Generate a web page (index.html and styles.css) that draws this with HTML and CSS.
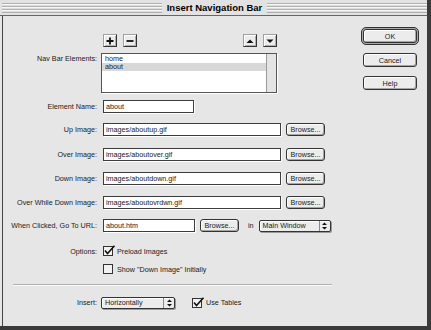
FILE: index.html
```html
<!DOCTYPE html>
<html lang="en">
<head>
  <meta charset="UTF-8" />
  <title>Insert Navigation Bar</title>
  <link rel="stylesheet" href="styles.css">
</head>
<body>

  <div class="window">
    <!-- Title Bar -->
    <div class="titlebar">
      <div class="stripes"><span class="title">Insert Navigation Bar</span></div>
    </div>

    <div class="content">
      <!-- Form -->
      <div class="form">
        <div class="row tools">
          <span class="label"></span>
          <div class="tool-group">
            <div class="tool-pair">
              <span class="tool-btn"><svg width="8" height="8" viewBox="0 0 8 8"><path d="M4 0.5V7.5M0.5 4H7.5" stroke="#111" stroke-width="1.8"/></svg></span>
              <span class="tool-btn"><svg width="8" height="8" viewBox="0 0 8 8"><path d="M0.5 4H7.5" stroke="#111" stroke-width="1.8"/></svg></span>
            </div>
            <div class="tool-pair">
              <span class="tool-btn"><svg width="8" height="8" viewBox="0 0 8 8"><path d="M0.5 6L4 2.5L7.5 6Z" fill="#111"/></svg></span>
              <span class="tool-btn"><svg width="8" height="8" viewBox="0 0 8 8"><path d="M0.5 2.5L4 6L7.5 2.5Z" fill="#111"/></svg></span>
            </div>
          </div>
        </div>

        <div class="row list-row">
          <span class="label top">Nav Bar Elements:</span>
          <div class="listbox">
            <div class="items">
              <div class="item">home</div>
              <div class="item selected">about</div>
            </div>
            <div class="scroll"></div>
          </div>
        </div>

        <div class="row r-name">
          <span class="label">Element Name:</span>
          <div class="input short">about</div>
        </div>

        <div class="row r-up">
          <span class="label">Up Image:</span>
          <div class="input long">images/aboutup.gif</div>
          <span class="btn browse">Browse...</span>
        </div>

        <div class="row r-over">
          <span class="label">Over Image:</span>
          <div class="input long">images/aboutover.gif</div>
          <span class="btn browse">Browse...</span>
        </div>

        <div class="row r-down">
          <span class="label">Down Image:</span>
          <div class="input long">images/aboutdown.gif</div>
          <span class="btn browse">Browse...</span>
        </div>

        <div class="row r-owd">
          <span class="label">Over While Down Image:</span>
          <div class="input long">images/aboutovrdwn.gif</div>
          <span class="btn browse">Browse...</span>
        </div>

        <div class="row r-url">
          <span class="label">When Clicked, Go To URL:</span>
          <div class="input url">about.htm</div>
          <span class="btn browse">Browse...</span>
          <span class="in">in</span>
          <div class="select window-select">
            <span class="select-text">Main Window</span>
            <span class="select-arrows"><svg width="5" height="8" viewBox="0 0 5 8"><path d="M0 3L2.5 0.5L5 3Z M0 5L2.5 7.5L5 5Z" fill="#111"/></svg></span>
          </div>
        </div>

        <div class="row r-opt1">
          <span class="label">Options:</span>
          <span class="check">
            <svg width="13" height="12" viewBox="0 0 13 12"><rect x="0.5" y="1.5" width="9" height="9" fill="#f2f2f2" stroke="#333"/><path d="M2 5.5L4.5 8.5L11.5 0.8" fill="none" stroke="#111" stroke-width="1.6"/></svg>
            Preload Images
          </span>
        </div>

        <div class="row r-opt2">
          <span class="label"></span>
          <span class="check">
            <svg width="13" height="12" viewBox="0 0 13 12"><rect x="0.5" y="1.5" width="9" height="9" fill="#f2f2f2" stroke="#333"/></svg>
            Show "Down Image" Initially
          </span>
        </div>

        <div class="separator"></div>

        <div class="row r-insert">
          <span class="label">Insert:</span>
          <div class="select insert-select">
            <span class="select-text">Horizontally</span>
            <span class="select-arrows"><svg width="5" height="8" viewBox="0 0 5 8"><path d="M0 3L2.5 0.5L5 3Z M0 5L2.5 7.5L5 5Z" fill="#111"/></svg></span>
          </div>
          <span class="check tables">
            <svg width="13" height="12" viewBox="0 0 13 12"><rect x="0.5" y="1.5" width="9" height="9" fill="#f2f2f2" stroke="#333"/><path d="M2 5.5L4.5 8.5L11.5 0.8" fill="none" stroke="#111" stroke-width="1.6"/></svg>
            Use Tables
          </span>
        </div>
      </div>

      <!-- Dialog Buttons -->
      <div class="actions">
        <div class="default-ring"><span class="btn action">OK</span></div>
        <span class="btn action cancel">Cancel</span>
        <span class="btn action help">Help</span>
      </div>
    </div>
  </div>

</body>
</html>
```

FILE: styles.css
```css
:root {
  --face: #e6e6e6;
  --dark: #2a2a2a;
  --frame: #3a3a3a;
  --text: #1a1a1a;
}

* {
  box-sizing: border-box;
}

body {
  margin: 0;
  background: var(--face);
  font-family: "Liberation Sans", Arial, sans-serif;
  font-size: 7.2px;
  color: var(--text);
}

.window {
  width: 431px;
  height: 330px;
  display: flex;
  flex-direction: column;
  border-right: 4px solid var(--frame);
  border-bottom: 4px solid var(--frame);
  background: var(--face);
}

/* Title bar */
.titlebar {
  height: 16px;
  padding: 3px 0 2px 2px;
  border-bottom: 1px solid #666;
  background: #e2e2e2;
}

.stripes {
  height: 10px;
  display: flex;
  justify-content: center;
  align-items: center;
  background: repeating-linear-gradient(to bottom, #b0b0b0 0 1px, #f6f6f6 1px 2px, #dcdcdc 2px 3px);
}

.title {
  padding: 0 5px;
  background: #e2e2e2;
  font-size: 9.5px;
  font-weight: bold;
  line-height: 12px;
  color: #000;
}

.content {
  flex: 1;
  display: flex;
  margin-left: 2px;
  border-left: 1px solid #444;
}

/* Form */
.form {
  width: 340px;
  display: flex;
  flex-direction: column;
  padding-top: 18px;
}

.row {
  display: flex;
  align-items: center;
  height: 13px;
}

.label {
  width: 94px;
  flex: none;
  margin-right: 6px;
  text-align: right;
  white-space: nowrap;
}

.label.top {
  align-self: flex-start;
  padding-top: 1px;
}

.tool-group {
  width: 174px;
  display: flex;
  justify-content: space-between;
}

.tool-pair {
  display: flex;
  gap: 6px;
}

.tool-btn {
  width: 14px;
  height: 13px;
  display: flex;
  align-items: center;
  justify-content: center;
  background: #ececec;
  border: 1px solid #a0a0a0;
  border-right-color: #333;
  border-bottom-color: #333;
  box-shadow: inset 1px 1px 0 #fff, inset -1px -1px 0 #b0b0b0;
}

.list-row {
  height: 40px;
  align-items: stretch;
  margin-top: 6px;
}

.listbox {
  width: 176px;
  margin-left: -2px;
  display: flex;
  background: #fff;
  border: 1px solid #555;
  box-shadow: 1px 1px 0 #fff;
}

.items {
  flex: 1;
  padding-top: 1px;
}

.item {
  height: 8px;
  line-height: 8px;
  padding-left: 3px;
}

.item.selected {
  background: #d8d8d8;
}

.scroll {
  width: 10px;
  background: #e4e4e4;
  border-left: 1px solid #9a9a9a;
}

.input {
  height: 13px;
  line-height: 11px;
  padding-left: 2px;
  background: #fff;
  border: 1px solid #3c3c3c;
  box-shadow: 1px 1px 0 #fff;
  white-space: nowrap;
}

.input.short {
  width: 91px;
}

.input.long {
  width: 178px;
}

.input.url {
  width: 92px;
}

.btn {
  display: flex;
  align-items: center;
  justify-content: center;
  background: #ececec;
  border: 1px solid #333;
  border-radius: 3px;
  box-shadow: inset 1px 1px 0 #fff, inset -1px -1px 0 #a5a5a5;
}

.browse {
  width: 39px;
  height: 13px;
  margin-left: 5px;
}

.r-name { margin-top: 7px; }
.r-up { margin-top: 10px; }
.r-over { margin-top: 12px; }
.r-down { margin-top: 11px; }
.r-owd { margin-top: 11px; }
.r-url { margin-top: 10px; }
.r-opt1 { margin-top: 13px; height: 12px; }
.r-opt2 { margin-top: 6px; height: 12px; }
.r-insert { margin-top: 10px; }

.in {
  margin: 0 5px 0 9px;
}

.select {
  height: 12px;
  display: flex;
  align-items: center;
  background: #ececec;
  border: 1px solid #333;
  border-radius: 2px;
  box-shadow: inset 1px 1px 0 #fff, 1px 1px 0 #9a9a9a;
}

.select-text {
  flex: 1;
  padding-left: 3px;
  white-space: nowrap;
}

.select-arrows {
  width: 11px;
  height: 100%;
  display: flex;
  align-items: center;
  justify-content: center;
  border-left: 1px solid #8a8a8a;
}

.window-select {
  width: 72px;
}

.insert-select {
  width: 74px;
  margin-left: -2px;
}

.check {
  display: flex;
  align-items: center;
  gap: 1px;
  white-space: nowrap;
}

.check svg {
  flex: none;
}

.tables {
  margin-left: 17px;
}

.separator {
  width: 319px;
  height: 2px;
  margin: 9px 0 0 10px;
  border-top: 1px solid #b0b0b0;
  border-bottom: 1px solid #fafafa;
}

/* Dialog buttons */
.actions {
  width: 58px;
  margin-left: 18px;
  padding-top: 11px;
  display: flex;
  flex-direction: column;
  align-items: center;
}

.default-ring {
  width: 58px;
  height: 18px;
  padding: 1px;
  border: 1px solid #333;
  border-radius: 5px;
  background: #a8a8a8;
}

.action {
  width: 54px;
  height: 14px;
}

.default-ring .action {
  width: 100%;
  height: 100%;
}

.cancel {
  margin-top: 8px;
}

.help {
  margin-top: 9px;
}
```
